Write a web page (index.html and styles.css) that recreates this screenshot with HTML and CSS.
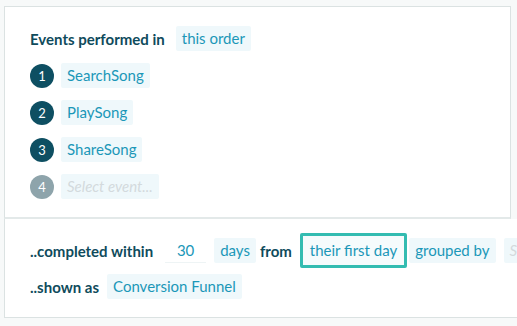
FILE: index.html
```html
<!DOCTYPE html>
<html lang="en">
<head>
  <meta charset="UTF-8" />
  <title>Funnel query</title>
  <link rel="stylesheet" href="styles.css">
</head>
<body>
  <div class="query">
    <div class="steps">
      <div class="row">
        <span class="label">Events performed in</span>
        <span class="pill">this order</span>
      </div>
      <div class="row">
        <span class="num">1</span>
        <span class="pill">SearchSong</span>
      </div>
      <div class="row">
        <span class="num">2</span>
        <span class="pill">PlaySong</span>
      </div>
      <div class="row">
        <span class="num">3</span>
        <span class="pill">ShareSong</span>
      </div>
      <div class="row">
        <span class="num empty">4</span>
        <span class="pill placeholder">Select event...</span>
      </div>
    </div>
    <div class="options">
      <div class="row">
        <span class="label">..completed within</span>
        <span class="count">30</span>
        <span class="pill">days</span>
        <span class="label">from</span>
        <span class="pill active">their first day</span>
        <span class="pill">grouped by</span>
        <span class="pill placeholder">Select property</span>
      </div>
      <div class="row">
        <span class="label">..shown as</span>
        <span class="pill">Conversion Funnel</span>
      </div>
    </div>
  </div>
</body>
</html>
```

FILE: styles.css
```css
body {
  margin: 0;
  background: #f7f9f9;
  font-family: 'Lato', sans-serif;
  font-size: 15px;
  overflow: hidden;
}
.query {
  padding: 6px 0 0 4px;
}
.steps {
  width: 480px;
  background: #fff;
  border: 1px solid #dbe2e2;
  border-bottom: 2px solid #e3e9e9;
  padding: 19px 0 18px 25px;
  display: flex;
  flex-direction: column;
  gap: 12px;
}
.options {
  width: 600px;
  background: #fff;
  border-left: 1px solid #dbe2e2;
  border-bottom: 1px solid #dbe2e2;
  padding: 14px 0 18px 25px;
  display: flex;
  flex-direction: column;
  gap: 6px;
}
.row {
  display: flex;
  align-items: center;
  height: 25px;
}
.options .row:first-child {
  height: 35px;
}
.label {
  font-weight: bold;
  color: #0f4b5c;
  margin-right: 8px;
}
.steps .label {
  margin-right: 11px;
}
.pill {
  background: #eff8fb;
  color: #1b97b8;
  padding: 0 6px;
  height: 25px;
  line-height: 25px;
  border-radius: 2px;
  margin-right: 4px;
  white-space: nowrap;
}
.pill.active {
  height: 29px;
  line-height: 29px;
  border: 3px solid #33bcb1;
  background: #f5fbfc;
  padding: 0 7px;
  margin-right: 2px;
}
.pill.placeholder {
  color: #d3dadd;
  font-style: italic;
  margin-left: 4px;
}
.steps .pill.placeholder {
  margin-left: 0;
}
.num {
  width: 24px;
  height: 24px;
  border-radius: 50%;
  background: #0e4f62;
  color: #fff;
  font-size: 13px;
  display: flex;
  align-items: center;
  justify-content: center;
  margin-right: 7px;
}
.num.empty {
  background: #8ea4ab;
}
.count {
  width: 41px;
  text-align: center;
  color: #1b97b8;
  border-bottom: 1px solid #eef4f5;
  line-height: 24px;
  margin: 0 8px 0 4px;
}
```
